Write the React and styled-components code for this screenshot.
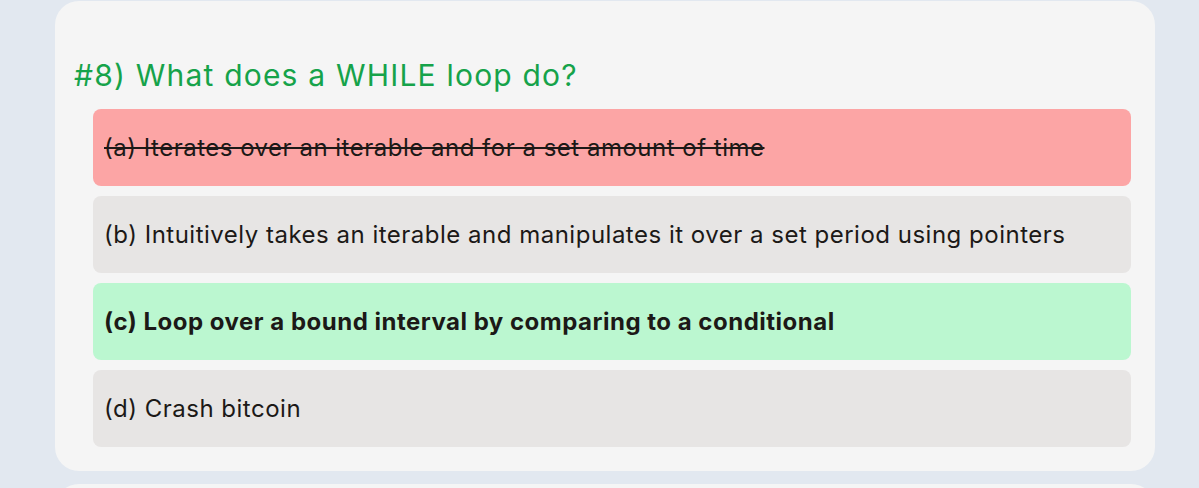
import React from 'react'
import styled, { createGlobalStyle } from "styled-components";

const GlobalStyle = createGlobalStyle`
    body {
        margin:0;
        background:#e2e8f0;
        font-family: Inter, "Noto Sans", sans-serif;
    }
`;

const Page = styled.div`
    display:flex;
    flex-direction:column;
    gap:13px;
    padding:1px 44px 0 55px;
`;

const Card = styled.div`
    background:#f5f5f5;
    border-radius:24px;
    padding:56px 24px 24px 19px;
    min-height:${props => props.empty ? "40px" : "auto"};
`;

const Question = styled.h2`
    margin:0 0 16px 0;
    font-size:30px;
    font-weight:400;
    line-height:36px;
    letter-spacing:1.2px;
    color:#16a34a;
`;

const Options = styled.div`
    display:flex;
    flex-direction:column;
    gap:10px;
    margin-left:19px;
`;

const Option = styled.div`
    background:${props => props.state === "wrong" ? "#fca5a5" : props.state === "right" ? "#bbf7d0" : "#e7e5e4"};
    border-radius:8px;
    padding:0 11px;
    height:77px;
    display:flex;
    align-items:center;
    font-size:24px;
    letter-spacing:0.5px;
    color:#1c1917;
    font-weight:${props => props.state === "right" ? 700 : 400};
    text-decoration:${props => props.state === "wrong" ? "line-through" : "none"};
`;

const options = [
    { text: "(a) Iterates over an iterable and for a set amount of time", state: "wrong" },
    { text: "(b) Intuitively takes an iterable and manipulates it over a set period using pointers" },
    { text: "(c) Loop over a bound interval by comparing to a conditional", state: "right" },
    { text: "(d) Crash bitcoin" },
];

function App() {
    return (
        <>
            <GlobalStyle />
            <Page>
                <Card>
                    <Question>#8) What does a WHILE loop do?</Question>
                    <Options>
                        {options.map((o) => (
                            <Option key={o.text} state={o.state}>{o.text}</Option>
                        ))}
                    </Options>
                </Card>
                <Card empty />
            </Page>
        </>
    )
}

export default App;
